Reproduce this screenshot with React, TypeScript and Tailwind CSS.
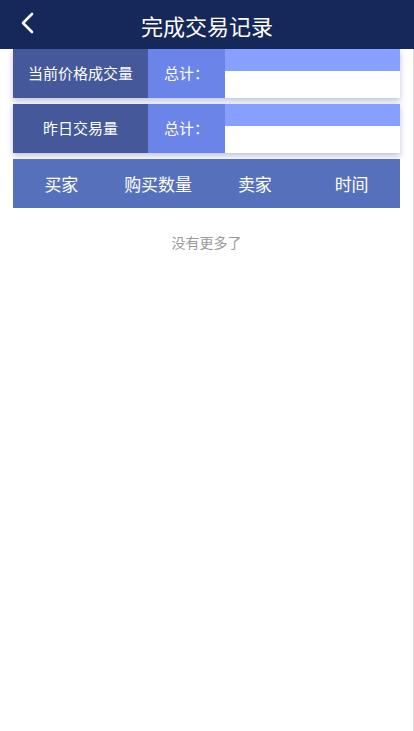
const font = { fontFamily: '"Noto Sans CJK SC", "Noto Sans", sans-serif' };

function StatRow({ label }: { label: string }) {
    return (
        <div className="flex h-[49px] mx-[13px] shadow-[0_3px_6px_rgba(70,85,160,0.35)]">
            <div className="w-[135px] bg-[#45589a] flex items-center justify-center text-white text-[15px]">
                {label}
            </div>
            <div className="w-[77px] bg-[#6a84e8] flex items-center justify-center text-white text-[15px]">
                总计：
            </div>
            <div className="flex-1 flex flex-col">
                <div className="h-[22px] bg-[#87a0ff]" />
                <div className="flex-1 bg-white" />
            </div>
        </div>
    );
}

export default function App() {
    const columns = ['买家', '购买数量', '卖家', '时间'];

    return (
        <div className="min-h-[731px] bg-white flex flex-col" style={font}>
            <div className="h-[49px] bg-[#16275a] flex items-center relative">
                <button className="absolute left-[18px] top-[11px] text-white">
                    <svg width="18" height="24" viewBox="0 0 18 24" fill="none">
                        <polyline
                            points="14,3 5,12 14,21"
                            stroke="white"
                            strokeWidth="2.6"
                            strokeLinecap="round"
                            strokeLinejoin="round"
                        />
                    </svg>
                </button>
                <div className="flex-1 text-center text-white text-[22px] leading-none">
                    完成交易记录
                </div>
            </div>
            <div className="flex-1 border-r border-[#dcdcdc] flex flex-col">
                <StatRow label="当前价格成交量" />
                <div className="h-[6px]" />
                <StatRow label="昨日交易量" />
                <div className="h-[6px]" />
                <div className="mx-[13px] h-[49px] bg-[#5770bb] grid grid-cols-4 items-center text-white text-[17px]">
                    {columns.map(c => (
                        <div key={c} className="text-center">{c}</div>
                    ))}
                </div>
                <div className="pt-[24px] text-center text-[14px] text-[#999999]">
                    没有更多了
                </div>
            </div>
        </div>
    );
}
